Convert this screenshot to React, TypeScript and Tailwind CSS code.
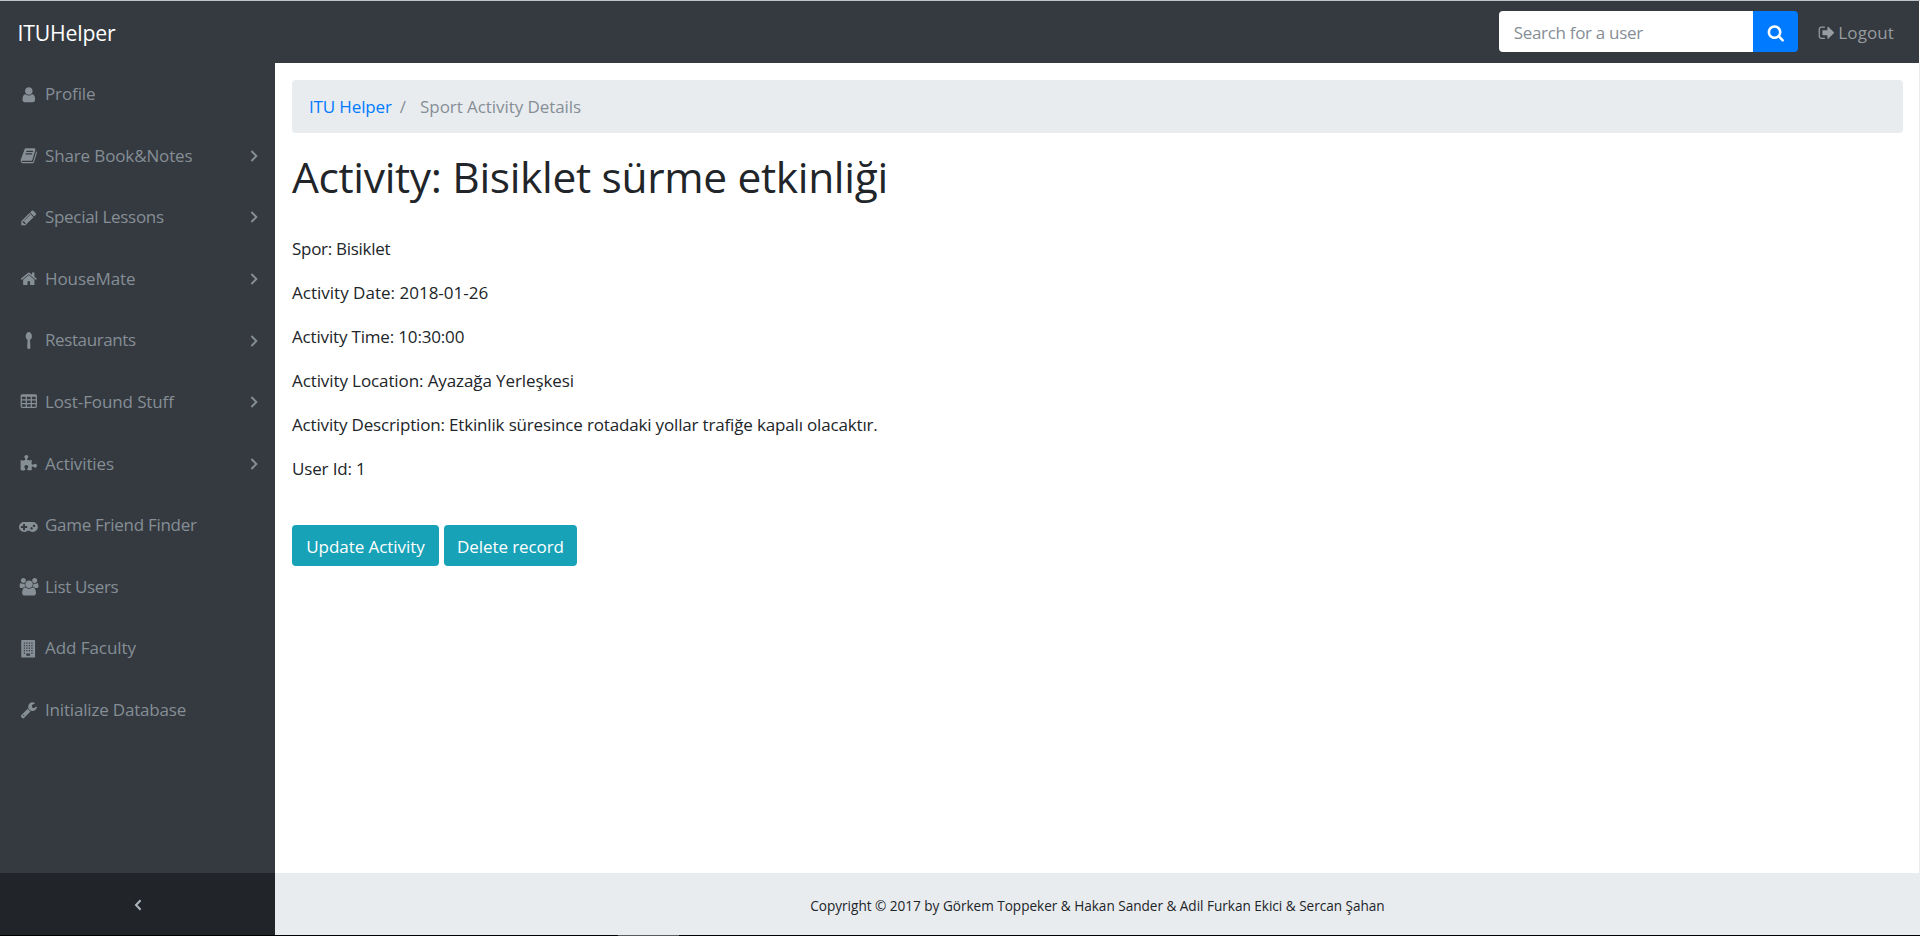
type Glyph = { width?: number; d: string };

const icons: Record<string, Glyph> = {
  user: {
    d: 'M1536 1399q0 109-62.5 187t-150.5 78h-854q-88 0-150.5-78t-62.5-187q0-85 8.5-160.5t31.5-152 58.5-131 94-89 134.5-34.5q131 128 313 128t313-128q76 0 134.5 34.5t94 89 58.5 131 31.5 152 8.5 160.5zm-256-887q0 159-112.5 271.5t-271.5 112.5-271.5-112.5-112.5-271.5 112.5-271.5 271.5-112.5 271.5 112.5 112.5 271.5z',
  },
  book: {
    d: 'M1703 478q40 57 18 129l-275 906q-19 64-76.5 107.5t-122.5 43.5h-923q-77 0-148.5-53.5t-99.5-131.5q-24-67-2-127 0-4 3-27t4-37q1-8-3-21.5t-3-19.5q2-11 8-21t16.5-23.5 16.5-23.5q23-38 45-91.5t30-91.5q3-10 .5-30t-.5-28q3-11 17-28t17-23q21-36 42-92t25-90q1-9-2.5-32t.5-28q4-13 22-30.5t22-22.5q19-26 42.5-84.5t27.5-96.5q1-8-3-25.5t-2-26.5q2-8 9-18t18-23 17-21q8-12 16.5-30.5t15-35 16-36 19.5-32 26.5-23.5 36-11.5 47.5 5.5l-1 3q38-9 51-9h761q74 0 114 56t18 130l-274 906q-36 119-71.5 153.5t-128.5 34.5h-869q-27 0-38 15-11 16-1 43 24 70 144 70h923q29 0 56-15.5t35-41.5l300-987q7-22 5-57 38 15 59 43zm-1064 2q-4 13 2 22.5t20 9.5h608q13 0 25.5-9.5t16.5-22.5l21-64q4-13-2-22.5t-20-9.5h-608q-13 0-25.5 9.5t-16.5 22.5zm-83 256q-4 13 2 22.5t20 9.5h608q13 0 25.5-9.5t16.5-22.5l21-64q4-13-2-22.5t-20-9.5h-608q-13 0-25.5 9.5t-16.5 22.5z',
  },
  pencil: {
    d: 'M491 1536l91-91-235-235-91 91v107h128v128h107zm523-928q0-22-22-22-10 0-17 7l-542 542q-7 7-7 17 0 22 22 22 10 0 17-7l542-542q7-7 7-17zm-54-192l416 416-832 832h-416v-416zm683 96q0 53-37 90l-166 166-416-416 166-165q36-38 90-38 53 0 91 38l235 234q37 39 37 91z',
  },
  home: {
    d: 'M1472 992v480q0 26-19 45t-45 19h-384v-384h-256v384h-384q-26 0-45-19t-19-45v-480q0-1 .5-3t.5-3l575-474 575 474q1 2 1 6zm223-69l-62 74q-8 9-21 11h-3q-13 0-21-7l-692-577-692 577q-12 8-24 7-13-2-21-11l-62-74q-8-10-7-23.5t11-21.5l719-599q32-26 76-26t76 26l244 204v-195q0-14 9-23t23-9h192q14 0 23 9t9 23v408l219 182q10 8 11 21.5t-7 23.5z',
  },
  spoon: {
    d: 'M1216 448q0 120-54 218t-138 146l32 720q4 104-40 156t-120 52-120-52-40-156l32-720q-84-48-138-146t-54-218q0-170 94-309t226-139 226 139 94 309z',
  },
  table: {
    d: 'M576 1376v-192q0-14-9-23t-23-9h-320q-14 0-23 9t-9 23v192q0 14 9 23t23 9h320q14 0 23-9t9-23zm0-384v-192q0-14-9-23t-23-9h-320q-14 0-23 9t-9 23v192q0 14 9 23t23 9h320q14 0 23-9t9-23zm512 384v-192q0-14-9-23t-23-9h-320q-14 0-23 9t-9 23v192q0 14 9 23t23 9h320q14 0 23-9t9-23zm-512-768v-192q0-14-9-23t-23-9h-320q-14 0-23 9t-9 23v192q0 14 9 23t23 9h320q14 0 23-9t9-23zm512 384v-192q0-14-9-23t-23-9h-320q-14 0-23 9t-9 23v192q0 14 9 23t23 9h320q14 0 23-9t9-23zm512 384v-192q0-14-9-23t-23-9h-320q-14 0-23 9t-9 23v192q0 14 9 23t23 9h320q14 0 23-9t9-23zm-512-768v-192q0-14-9-23t-23-9h-320q-14 0-23 9t-9 23v192q0 14 9 23t23 9h320q14 0 23-9t9-23zm512 384v-192q0-14-9-23t-23-9h-320q-14 0-23 9t-9 23v192q0 14 9 23t23 9h320q14 0 23-9t9-23zm0-384v-192q0-14-9-23t-23-9h-320q-14 0-23 9t-9 23v192q0 14 9 23t23 9h320q14 0 23-9t9-23zm128-320v1088q0 66-47 113t-113 47h-1344q-66 0-113-47t-47-113v-1088q0-66 47-113t113-47h1344q66 0 113 47t47 113z',
  },
  puzzle: {
    d: 'M1728 1098q0 81-44.5 135t-123.5 54q-41 0-77.5-17.5t-59-38-56.5-38-71-17.5q-110 0-110 124 0 39 16 115t15 115v5q-22 0-33 1-34 3-97.5 11.5t-115.5 13.5-98 5q-61 0-103-26.5t-42-83.5q0-37 17.5-71t38-56.5 38-59 17.5-77.5q0-79-54-123.5t-135-44.5q-84 0-143 45.5t-59 127.5q0 43 15 83t33.5 64.5 33.5 53 15 50.5q0 45-46 89-37 35-117 35-95 0-245-24-9-2-27.5-4t-27.5-4l-13-2q-1 0-3-1-2 0-2-1v-1024q2 1 17.5 3.5t34 5 21.5 3.5q150 24 245 24 80 0 117-35 46-44 46-89 0-22-15-50.5t-33.5-53-33.5-64.5-15-83q0-82 59-127.5t144-45.5q80 0 134 44.5t54 123.5q0 41-17.5 77.5t-38 59-38 56.5-17.5 71q0 57 42 83.5t103 26.5q64 0 180-15t163-17v2q-1 2-3.5 17.5t-5 34-3.5 21.5q-24 150-24 245 0 80 35 117 44 46 89 46 22 0 50.5-15t53-33.5 64.5-33.5 83-15q82 0 127.5 59t45.5 143z',
  },
  gamepad: {
    width: 1920,
    d: 'M832 1088v-128q0-14-9-23t-23-9h-192v-192q0-14-9-23t-23-9h-128q-14 0-23 9t-9 23v192h-192q-14 0-23 9t-9 23v128q0 14 9 23t23 9h192v192q0 14 9 23t23 9h128q14 0 23-9t9-23v-192h192q14 0 23-9t9-23zm576 64q0-53-37.5-90.5t-90.5-37.5-90.5 37.5-37.5 90.5 37.5 90.5 90.5 37.5 90.5-37.5 37.5-90.5zm256-256q0-53-37.5-90.5t-90.5-37.5-90.5 37.5-37.5 90.5 37.5 90.5 90.5 37.5 90.5-37.5 37.5-90.5zm256 128q0 212-150 362t-362 150q-192 0-338-128h-220q-146 128-338 128-212 0-362-150t-150-362 150-362 362-150h896q212 0 362 150t150 362z',
  },
  users: {
    width: 1984,
    d: 'M657 896q-162 5-265 128h-134q-82 0-138-40.5t-56-118.5q0-353 124-353 6 0 43.5 21t97.5 42.5 119 21.5q67 0 133-23-5 37-5 66 0 139 81 256zm1071 637q0 120-73 189.5t-194 69.5h-874q-121 0-194-69.5t-73-189.5q0-53 3.5-103.5t14-109 26.5-108.5 43-97.5 62-81 85.5-53.5 111.5-20q10 0 43 21.5t73 48 107 48 135 21.5 135-21.5 107-48 73-48 43-21.5q61 0 111.5 20t85.5 53.5 62 81 43 97.5 26.5 108.5 14 109 3.5 103.5zm-1024-1277q0 106-75 181t-181 75-181-75-75-181 75-181 181-75 181 75 75 181zm704 384q0 159-112.5 271.5t-271.5 112.5-271.5-112.5-112.5-271.5 112.5-271.5 271.5-112.5 271.5 112.5 112.5 271.5zm576 225q0 78-56 118.5t-138 40.5h-134q-103-123-265-128 81-117 81-256 0-29-5-66 66 23 133 23 59 0 119-21.5t97.5-42.5 43.5-21q124 0 124 353zm-128-609q0 106-75 181t-181 75-181-75-75-181 75-181 181-75 181 75 75 181z',
  },
  building: {
    d: 'M192 0h1280q64 0 64 64v1664q0 64-64 64h-1280q-64 0-64-64v-1664q0-64 64-64zM384 256v128h128v-128zM640 256v128h128v-128zM896 256v128h128v-128zM1152 256v128h128v-128zM384 512v128h128v-128zM640 512v128h128v-128zM896 512v128h128v-128zM1152 512v128h128v-128zM384 768v128h128v-128zM640 768v128h128v-128zM896 768v128h128v-128zM1152 768v128h128v-128zM384 1024v128h128v-128zM640 1024v128h128v-128zM896 1024v128h128v-128zM1152 1024v128h128v-128zM384 1280v128h128v-128zM1152 1280v128h128v-128zM640 1376v224h384v-224z',
  },
  wrench: {
    d: 'M448 1472q0-26-19-45t-45-19-45 19-19 45 19 45 45 19 45-19 19-45zm644-420l-682 682q-37 37-90 37-52 0-91-37l-106-108q-38-36-38-90 0-53 38-91l681-681q39 98 114.5 173.5t173.5 114.5zm634-435q0 39-23 106-47 134-164.5 217.5t-258.5 83.5q-185 0-316.5-131.5t-131.5-316.5 131.5-316.5 316.5-131.5q58 0 121.5 16.5t107.5 46.5q16 11 16 28t-16 28l-293 169v224l193 107q5-3 79-48.5t135.5-81 70.5-35.5q15 0 23.5 10t8.5 25z',
  },
  search: {
    d: 'M1216 832q0-185-131.5-316.5t-316.5-131.5-316.5 131.5-131.5 316.5 131.5 316.5 316.5 131.5 316.5-131.5 131.5-316.5zm512 832q0 52-38 90t-90 38q-54 0-90-38l-343-342q-179 124-399 124-143 0-273.5-55.5t-225-150-150-225-55.5-273.5 55.5-273.5 150-225 225-150 273.5-55.5 273.5 55.5 225 150 150 225 55.5 273.5q0 220-124 399l343 343q37 37 37 90z',
  },
  signOut: {
    d: 'M704 1440q0 4 1 20t.5 26.5-3 23.5-10 19.5-20.5 6.5h-320q-119 0-203.5-84.5t-84.5-203.5v-704q0-119 84.5-203.5t203.5-84.5h320q13 0 22.5 9.5t9.5 22.5q0 4 1 20t.5 26.5-3 23.5-10 19.5-20.5 6.5h-320q-66 0-113 47t-47 113v704q0 66 47 113t113 47h312l11.5 1 11.5 3 8 5.5 7 9 2 13.5zm928-544q0 26-19 45l-544 544q-19 19-45 19t-45-19-19-45v-288h-448q-26 0-45-19t-19-45v-384q0-26 19-45t45-19h448v-288q0-26 19-45t45-19 45 19l544 544q19 19 19 45z',
  },
};

function Icon({ name, className = '' }: { name: string; className?: string }) {
  const { width = 1792, d } = icons[name];
  return (
    <svg
      viewBox={`0 0 ${width} 1792`}
      className={`h-[17.6px] shrink-0 overflow-visible ${className}`}
      fill="currentColor"
      fillRule="evenodd"
      aria-hidden="true"
    >
      <path d={d} />
    </svg>
  );
}

const menu = [
  { icon: 'user', label: 'Profile', tracking: 'tracking-[-0.117px]' },
  { icon: 'book', label: 'Share Book&Notes', tracking: 'tracking-[-0.132px]', children: true },
  { icon: 'pencil', label: 'Special Lessons', tracking: 'tracking-[-0.295px]', children: true },
  { icon: 'home', label: 'HouseMate', tracking: 'tracking-[-0.079px]', children: true },
  { icon: 'spoon', label: 'Restaurants', tracking: 'tracking-[-0.395px]', children: true },
  { icon: 'table', label: 'Lost-Found Stuff', tracking: 'tracking-[-0.114px]', children: true },
  { icon: 'puzzle', label: 'Activities', tracking: 'tracking-[-0.103px]', children: true },
  { icon: 'gamepad', label: 'Game Friend Finder', tracking: 'tracking-[-0.28px]' },
  { icon: 'users', label: 'List Users', tracking: 'tracking-[-0.359px]' },
  { icon: 'building', label: 'Add Faculty', tracking: 'tracking-[-0.061px]' },
  { icon: 'wrench', label: 'Initialize Database', tracking: 'tracking-[-0.18px]' },
];

const details = [
  { text: 'Spor: Bisiklet', tracking: 'tracking-[-0.286px]' },
  { text: 'Activity Date: 2018-01-26', tracking: 'tracking-[0.01px]' },
  { text: 'Activity Time: 10:30:00', tracking: 'tracking-[-0.17px]' },
  { text: 'Activity Location: Ayazağa Yerleşkesi', tracking: 'tracking-[-0.1px]' },
  {
    text: 'Activity Description: Etkinlik süresince rotadaki yollar trafiğe kapalı olacaktır.',
    tracking: 'tracking-[-0.165px]',
  },
  { text: 'User Id: 1', tracking: 'tracking-[-0.15px]' },
];

function Navbar() {
  return (
    <header className="mr-px flex h-[62px] shrink-0 items-center bg-[#343a40] pl-[17.5px] pr-[25px]">
      <a className="pt-px text-[21.25px] leading-7 tracking-[-0.191px] text-white">ITUHelper</a>
      <form className="mb-px ml-auto flex h-[41px]">
        <input
          type="text"
          placeholder="Search for a user"
          className="w-[254px] rounded-l-[4px] bg-white pl-[15px] pt-[3px] tracking-[-0.312px] outline-none placeholder:text-[#868e96] placeholder:opacity-100"
        />
        <button type="button" className="flex w-[45px] items-center justify-center rounded-r-[4px] bg-[#007bff] pl-px pt-[3px] text-white">
          <Icon name="search" />
        </button>
      </form>
      <a className="ml-[20px] flex items-center gap-[3px] pt-[2px] tracking-[0.103px] text-[#989b9f]">
        <Icon name="signOut" />
        Logout
      </a>
    </header>
  );
}

function Sidebar() {
  return (
    <aside className="flex w-[275px] shrink-0 flex-col bg-[#343a40] text-[#868e96]">
      <ul className="flex-1 pt-[0.5px]">
        {menu.map(({ icon, label, tracking, children }) => (
          <li key={label} className="flex h-[61.6px] items-center pl-[17.6px] pr-[17px]">
            <span className="flex w-[22.6px] shrink-0 justify-center">
              <Icon name={icon} />
            </span>
            <span className={`ml-[4.8px] ${tracking}`}>{label}</span>
            {children && (
              <svg viewBox="0 0 8 12" className="ml-auto h-3 w-2" fill="none" stroke="currentColor" strokeWidth="1.9">
                <path d="M1.4 1l5 5-5 5" />
              </svg>
            )}
          </li>
        ))}
      </ul>
      <button type="button" className="flex h-[62px] items-center justify-center bg-[#212529] pt-[2px] text-[#adb5bd]">
        <svg viewBox="0 0 8 12" className="h-3 w-2" fill="none" stroke="currentColor" strokeWidth="2">
          <path d="M6.6 1.2l-4.6 4.8 4.6 4.8" />
        </svg>
      </button>
    </aside>
  );
}

export default function App() {
  return (
    <div className="flex h-[936px] w-[1920px] flex-col overflow-hidden bg-white font-['Open_Sans','Noto_Sans',sans-serif] text-[17px] leading-[26.4px] text-[#212529]">
      <div className="h-px shrink-0 bg-[#bcc4c8]" />
      <Navbar />
      <div className="flex min-h-0 flex-1">
        <Sidebar />
        <div className="flex flex-1 flex-col border-r border-[#ececec]">
          <main className="flex-1 pl-[17px] pr-4 pt-[17px]">
            <ol className="flex h-[53px] items-center rounded-[4px] bg-[#e9ecef] pl-[17px] pt-[2px]">
              <li className="tracking-[-0.138px] text-[#007bff]">ITU Helper</li>
              <li className="ml-[8px] text-[#868e96]">/</li>
              <li className="ml-[14px] tracking-[-0.065px] text-[#868e96]">Sport Activity Details</li>
            </ol>
            <h1 className="mt-[18px] text-[42.5px] leading-[52px] tracking-[-0.34px]">Activity: Bisiklet sürme etkinliği</h1>
            <div className="mt-[33px] flex flex-col gap-[17.6px]">
              {details.map(({ text, tracking }) => (
                <p key={text} className={tracking}>
                  {text}
                </p>
              ))}
            </div>
            <div className="mt-[43px] flex gap-[5px] text-white">
              <button type="button" className="h-[41px] w-[147px] rounded-[4px] bg-[#17a2b8] pt-[2px] tracking-[-0.054px]">
                Update Activity
              </button>
              <button type="button" className="h-[41px] w-[133px] rounded-[4px] bg-[#17a2b8] pt-[2px] tracking-[-0.088px]">
                Delete record
              </button>
            </div>
          </main>
          <footer className="flex h-[62px] items-center justify-center bg-[#e9ecef] pl-px pt-[5px] text-[13.6px] tracking-[-0.024px]">
            Copyright © 2017 by Görkem Toppeker &amp; Hakan Sander &amp; Adil Furkan Ekici &amp; Sercan Şahan
          </footer>
        </div>
      </div>
      <div className="flex h-px shrink-0 bg-black">
        <div className="ml-[618px] w-[61px] bg-[#5a5a5a]" />
      </div>
    </div>
  );
}
